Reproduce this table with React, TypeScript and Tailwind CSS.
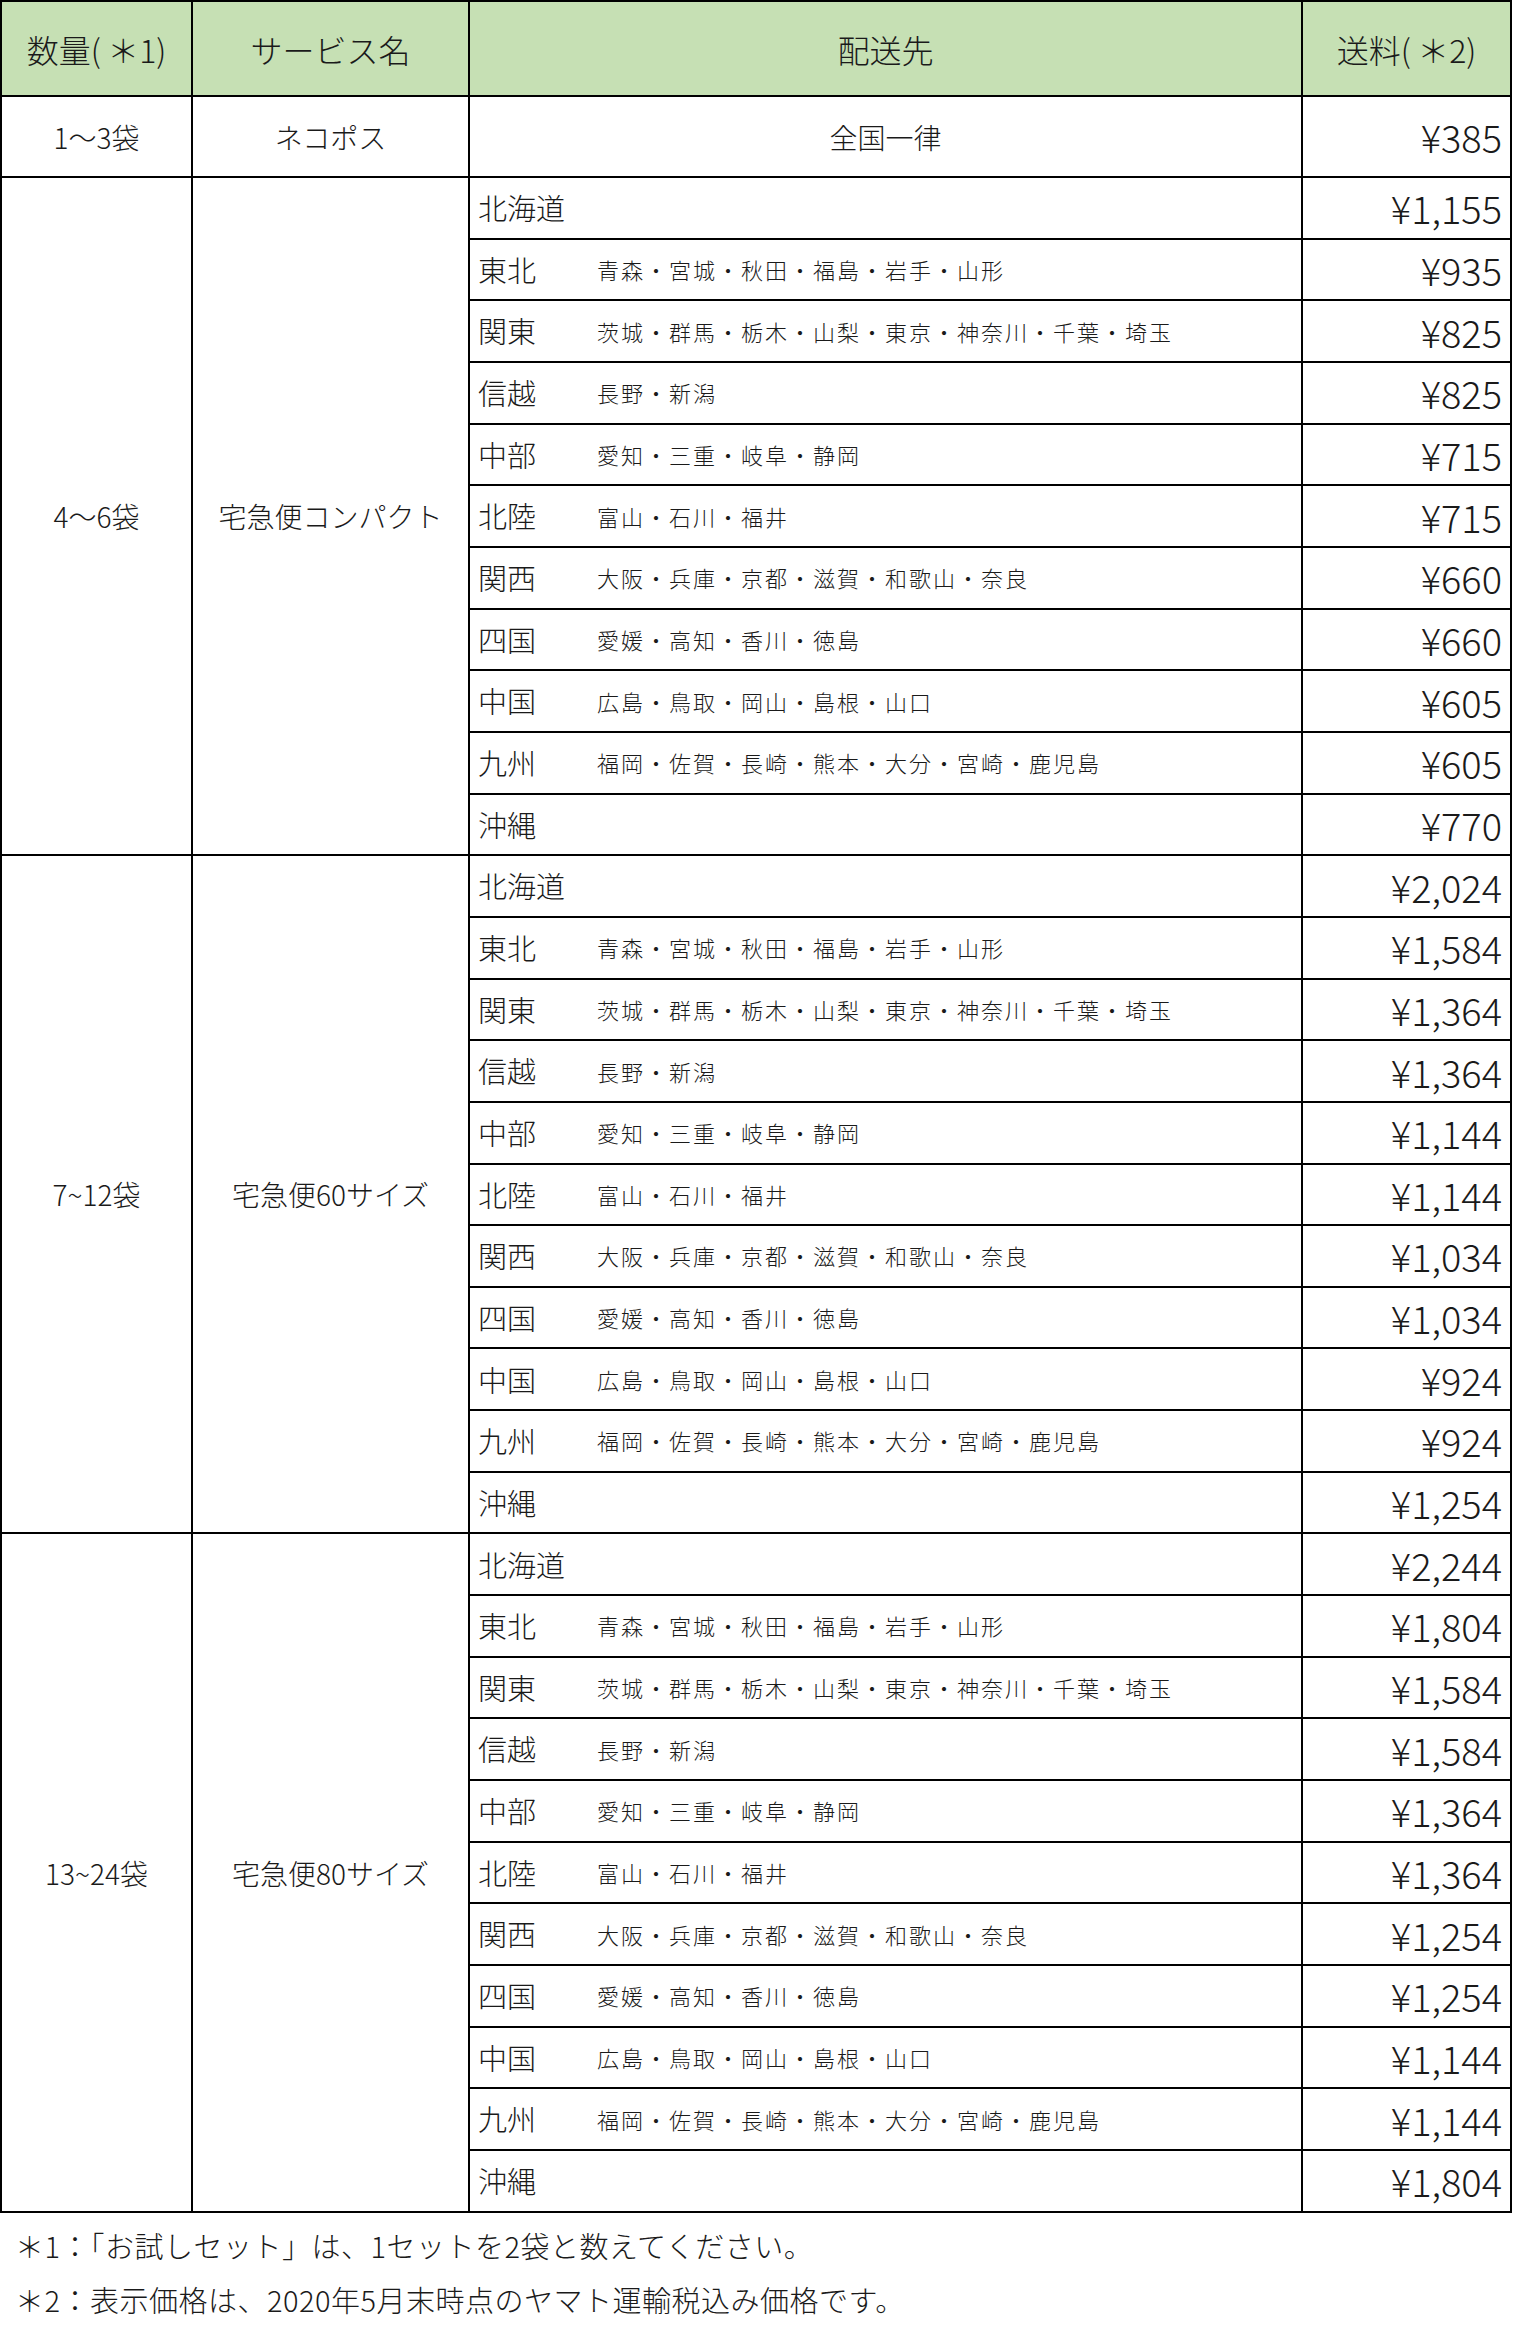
const groups = [
  {
    qty: '4〜6袋',
    service: '宅急便コンパクト',
    prices: ['¥1,155', '¥935', '¥825', '¥825', '¥715', '¥715', '¥660', '¥660', '¥605', '¥605', '¥770'],
  },
  {
    qty: '7~12袋',
    service: '宅急便60サイズ',
    prices: ['¥2,024', '¥1,584', '¥1,364', '¥1,364', '¥1,144', '¥1,144', '¥1,034', '¥1,034', '¥924', '¥924', '¥1,254'],
  },
  {
    qty: '13~24袋',
    service: '宅急便80サイズ',
    prices: ['¥2,244', '¥1,804', '¥1,584', '¥1,584', '¥1,364', '¥1,364', '¥1,254', '¥1,254', '¥1,144', '¥1,144', '¥1,804'],
  },
]

const regions = [
  { name: '北海道', prefs: '' },
  { name: '東北', prefs: '青森・宮城・秋田・福島・岩手・山形' },
  { name: '関東', prefs: '茨城・群馬・栃木・山梨・東京・神奈川・千葉・埼玉' },
  { name: '信越', prefs: '長野・新潟' },
  { name: '中部', prefs: '愛知・三重・岐阜・静岡' },
  { name: '北陸', prefs: '富山・石川・福井' },
  { name: '関西', prefs: '大阪・兵庫・京都・滋賀・和歌山・奈良' },
  { name: '四国', prefs: '愛媛・高知・香川・徳島' },
  { name: '中国', prefs: '広島・鳥取・岡山・島根・山口' },
  { name: '九州', prefs: '福岡・佐賀・長崎・熊本・大分・宮崎・鹿児島' },
  { name: '沖縄', prefs: '' },
]

const cell = 'border-r-2 border-b-2 border-black flex items-center'
const head = `${cell} justify-center bg-[#c6e0b4] text-[32px]`

export default function App() {
  return (
    <div className="bg-white min-h-[2330px] w-[1514px] text-[#1a1a1a] font-['Noto_Sans_CJK_JP','Noto_Sans',sans-serif] font-light">
      <div className="grid w-[1512px] grid-cols-[191px_277px_833px_209px] grid-rows-[95px_81px_repeat(33,61.67px)] border-l-2 border-t-2 border-black">
        <div className={head}>数量(&thinsp;＊1)</div>
        <div className={head}>サービス名</div>
        <div className={head}>配送先</div>
        <div className={head}>送料(&thinsp;＊2)</div>

        <div className={`${cell} justify-center text-[28px]`}>1〜3袋</div>
        <div className={`${cell} justify-center text-[28px]`}>ネコポス</div>
        <div className={`${cell} justify-center text-[28px]`}>全国一律</div>
        <div className={`${cell} justify-end pr-2 text-[38px]`}>¥385</div>

        {groups.map(g => (
          <>
            <div key={g.qty} className={`${cell} row-span-11 justify-center text-[28px]`}>{g.qty}</div>
            <div key={g.service} className={`${cell} row-span-11 justify-center text-[28px]`}>{g.service}</div>
            {regions.map((r, i) => (
              <>
                <div key={`${g.qty}-r${i}`} className={`${cell} pl-2`}>
                  <span className="w-[119px] text-[29px]">{r.name}</span>
                  <span className="text-[22px] tracking-[2px]">{r.prefs}</span>
                </div>
                <div key={`${g.qty}-p${i}`} className={`${cell} justify-end pr-2 text-[38px]`}>{g.prices[i]}</div>
              </>
            ))}
          </>
        ))}
      </div>

      <div className="pl-[15px] pt-[5px] text-[29px] tracking-[0.5px] leading-[54px]">
        <p>＊1：「お試しセット」は、1セットを2袋と数えてください。</p>
        <p>＊2：表示価格は、2020年5月末時点のヤマト運輸税込み価格です。</p>
      </div>
    </div>
  )
}
